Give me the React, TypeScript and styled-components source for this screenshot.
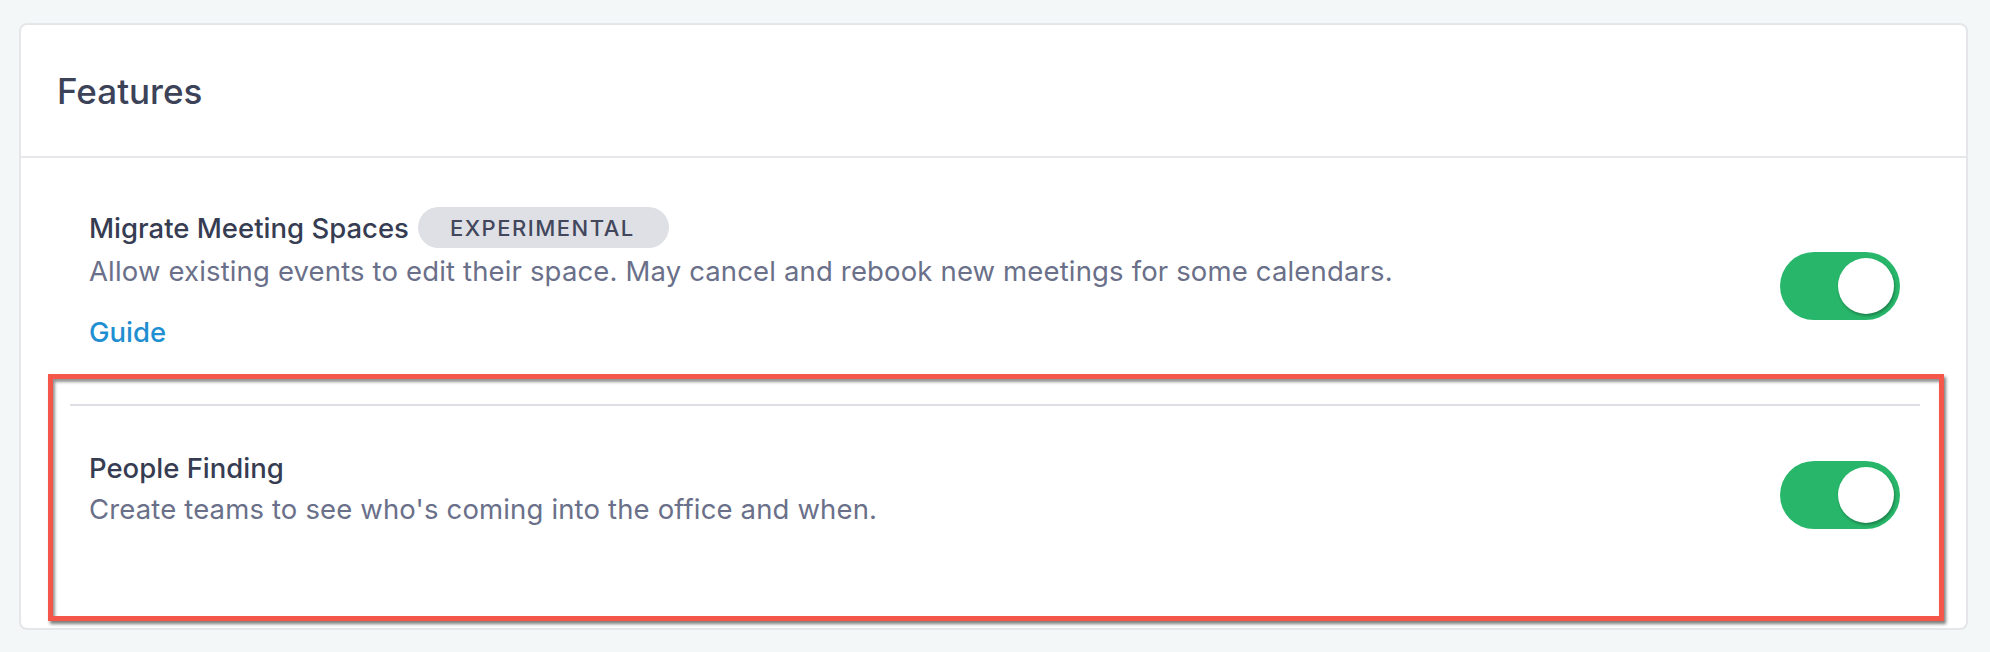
import styled, { createGlobalStyle } from "styled-components";

const GlobalStyle = createGlobalStyle`
  body {
    margin: 0;
    background: #f4f7f8;
    font-family: Inter, "Noto Sans", sans-serif;
  }
`;

const Page = styled.div`
  padding: 23px 22px 24px 19px;
`;

const Card = styled.section`
  background: #ffffff;
  border: 2px solid #e4e6e9;
  border-radius: 8px;
`;

const CardHeader = styled.header`
  display: flex;
  align-items: center;
  height: 131px;
  padding: 0 36px;
  border-bottom: 2px solid #e6e8eb;
`;

const CardTitle = styled.h2`
  margin: 0;
  font-size: 35px;
  font-weight: 500;
  color: #3c4257;
`;

const CardBody = styled.div`
  padding: 0 22px 7px 27px;
`;

const FeatureRow = styled.div`
  display: flex;
  align-items: center;
  justify-content: space-between;
  padding: 49px 44px 23px 41px;
`;

const Highlight = styled.div`
  border: 5px solid #f4574a;
  box-shadow: 2px 3px 3px rgba(40, 40, 40, 0.6),
    inset 2px 3px 3px rgba(40, 40, 40, 0.5);
  padding: 25px 19px 0 17px;
`;

const Divider = styled.hr`
  margin: 0;
  border: none;
  border-top: 2px solid #dedfe4;
`;

const HighlightRow = styled(FeatureRow)`
  padding: 42px 20px 87px 19px;
`;

const Info = styled.div`
  display: flex;
  flex-direction: column;
`;

const TitleLine = styled.div`
  display: flex;
  align-items: center;
  gap: 9px;
  min-height: 41px;
  margin-bottom: 4px;
`;

const FeatureName = styled.span`
  font-size: 27.5px;
  font-weight: 500;
  color: #363c51;
  line-height: 38px;
`;

const Badge = styled.span`
  display: inline-flex;
  align-items: center;
  height: 41px;
  padding: 0 34px 0 32px;
  border-radius: 21px;
  background: #dfe0e5;
  color: #42475c;
  font-size: 22px;
  font-weight: 500;
  letter-spacing: 1.5px;
`;

const Description = styled.p<{ $gap?: number }>`
  margin: ${(p) => p.$gap ?? 0}px 0 0;
  font-size: 27.5px;
  line-height: 38px;
  letter-spacing: 0.15px;
  color: #6a7089;
`;

const GuideLink = styled.a`
  margin-top: 23px;
  font-size: 27.5px;
  font-weight: 500;
  line-height: 38px;
  color: #1f8fd2;
  text-decoration: none;
`;

const Toggle = styled.button<{ $on: boolean; $nudge: number }>`
  position: relative;
  flex-shrink: 0;
  width: 120px;
  height: 68px;
  margin-top: ${(p) => p.$nudge}px;
  padding: 0;
  border: none;
  border-radius: 34px;
  background: ${(p) => (p.$on ? "#28b76a" : "#c9ccd3")};
  cursor: pointer;

  &::after {
    content: "";
    position: absolute;
    top: 6px;
    left: ${(p) => (p.$on ? "58px" : "6px")};
    width: 56px;
    height: 56px;
    border-radius: 50%;
    background: #ffffff;
    box-shadow: 1px 2px 3px rgba(0, 0, 0, 0.3);
  }
`;

export default function App() {
  return (
    <>
      <GlobalStyle />
      <Page>
        <Card>
          <CardHeader>
            <CardTitle>Features</CardTitle>
          </CardHeader>
          <CardBody>
            <FeatureRow>
              <Info>
                <TitleLine>
                  <FeatureName>Migrate Meeting Spaces</FeatureName>
                  <Badge>EXPERIMENTAL</Badge>
                </TitleLine>
                <Description>
                  Allow existing events to edit their space. May cancel and rebook new meetings for some calendars.
                </Description>
                <GuideLink href="#">Guide</GuideLink>
              </Info>
              <Toggle $on $nudge={14} aria-label="Migrate Meeting Spaces" />
            </FeatureRow>
            <Highlight>
              <Divider />
              <HighlightRow>
                <Info>
                  <FeatureName>People Finding</FeatureName>
                  <Description $gap={3}>
                    Create teams to see who's coming into the office and when.
                  </Description>
                </Info>
                <Toggle $on $nudge={13} aria-label="People Finding" />
              </HighlightRow>
            </Highlight>
          </CardBody>
        </Card>
      </Page>
    </>
  );
}
